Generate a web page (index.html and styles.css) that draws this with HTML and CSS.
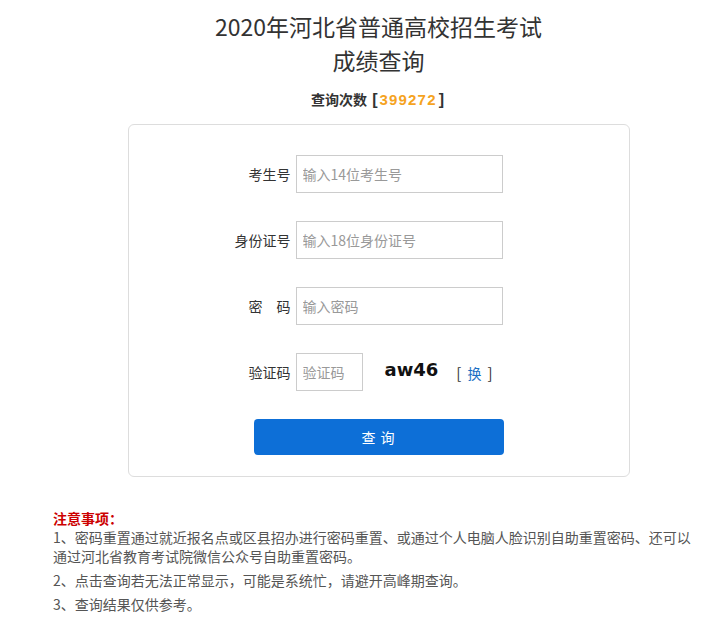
FILE: index.html
```html
<!DOCTYPE html>
<html lang="zh-CN">

<head>
    <meta charset="UTF-8">
    <meta name="viewport" content="width=device-width, initial-scale=1.0">
    <title>成绩查询</title>
    <link rel="stylesheet" href="styles.css">
</head>

<body>
    <div class="page">
        <!-- Title -->
        <div class="header">
            <h1>2020年河北省普通高校招生考试<br>成绩查询</h1>
            <div class="counter">查询次数 <span class="bracket">[</span><span class="num">399272</span><span class="bracket">]</span></div>
        </div>

        <!-- Query form -->
        <form class="query-box">
            <div class="row">
                <label>考生号</label>
                <input type="text" placeholder="输入14位考生号">
            </div>
            <div class="row">
                <label>身份证号</label>
                <input type="text" placeholder="输入18位身份证号">
            </div>
            <div class="row">
                <label>密　码</label>
                <input type="password" placeholder="输入密码">
            </div>
            <div class="row">
                <label>验证码</label>
                <input type="text" class="code-input" placeholder="验证码">
                <span class="captcha">aw46</span>
                <span class="refresh">[<a href="#">换</a>]</span>
            </div>
            <div class="submit-row">
                <button type="button">查 询</button>
            </div>
        </form>
    </div>

    <!-- Notes -->
    <div class="notes">
        <div class="notes-title">注意事项：</div>
        <p>1、密码重置通过就近报名点或区县招办进行密码重置、或通过个人电脑人脸识别自助重置密码、还可以通过河北省教育考试院微信公众号自助重置密码。</p>
        <p>2、点击查询若无法正常显示，可能是系统忙，请避开高峰期查询。</p>
        <p>3、查询结果仅供参考。</p>
    </div>
</body>

</html>
```

FILE: styles.css
```css
/* General styles */
body {
    font-family: "Noto Sans CJK SC", "Microsoft YaHei", sans-serif;
    font-size: 14px;
    color: #333;
    margin: 0;
    padding: 0;
    background: #fff;
}

.page {
    padding-left: 32px;
}

/* Header */
.header {
    text-align: center;
    padding-top: 9px;
}

h1 {
    font-size: 23px;
    font-weight: normal;
    line-height: 34px;
    margin: 0;
    color: #333;
}

.counter {
    margin-top: 12px;
    font-weight: bold;
    line-height: 20px;
    color: #333;
}

.counter .bracket {
    font-family: "Liberation Sans", sans-serif;
    font-size: 16px;
    margin: 0 2px;
}

.counter .num {
    font-family: "Liberation Sans", sans-serif;
    color: #f5a31f;
    font-size: 15px;
    letter-spacing: 1.2px;
}

/* Query form */
.query-box {
    width: 500px;
    margin: 14px auto 0;
    padding: 30px 0 21px;
    border: 1px solid #ddd;
    border-radius: 6px;
    display: flex;
    flex-direction: column;
    gap: 28px;
}

.row {
    display: flex;
    align-items: center;
    height: 38px;
}

.row label {
    width: 162px;
    margin-right: 5px;
    text-align: right;
    color: #333;
}

.row input {
    box-sizing: border-box;
    width: 207px;
    height: 38px;
    padding: 0 6px;
    border: 1px solid #ccc;
    border-radius: 0;
    font-family: inherit;
    font-size: 14px;
    color: #333;
    outline: none;
}

.row input::placeholder {
    color: #999;
}

.row .code-input {
    width: 67px;
}

.captcha {
    margin-left: 22px;
    margin-top: -6px;
    font-family: "DejaVu Sans", sans-serif;
    font-weight: bold;
    font-size: 18px;
    color: #111;
}

.refresh {
    margin-left: 18px;
    color: #333;
    font-size: 15px;
}

.refresh a {
    margin: 0 6px;
    font-size: 14px;
    color: #1a6fc4;
    text-decoration: none;
}

.submit-row {
    display: flex;
    justify-content: center;
}

button {
    width: 250px;
    height: 36px;
    background: #0d6fd7;
    color: #fff;
    border: none;
    border-radius: 4px;
    font-family: inherit;
    font-size: 14px;
    letter-spacing: 1px;
    cursor: pointer;
}

button:hover {
    background: #0b60bb;
}

/* Notes */
.notes {
    width: 645px;
    margin: 32px 0 0 53px;
    line-height: 19px;
    color: #555;
}

.notes-title {
    color: #c00;
    font-weight: bold;
}

.notes p {
    margin: 0 0 5px;
}
```
